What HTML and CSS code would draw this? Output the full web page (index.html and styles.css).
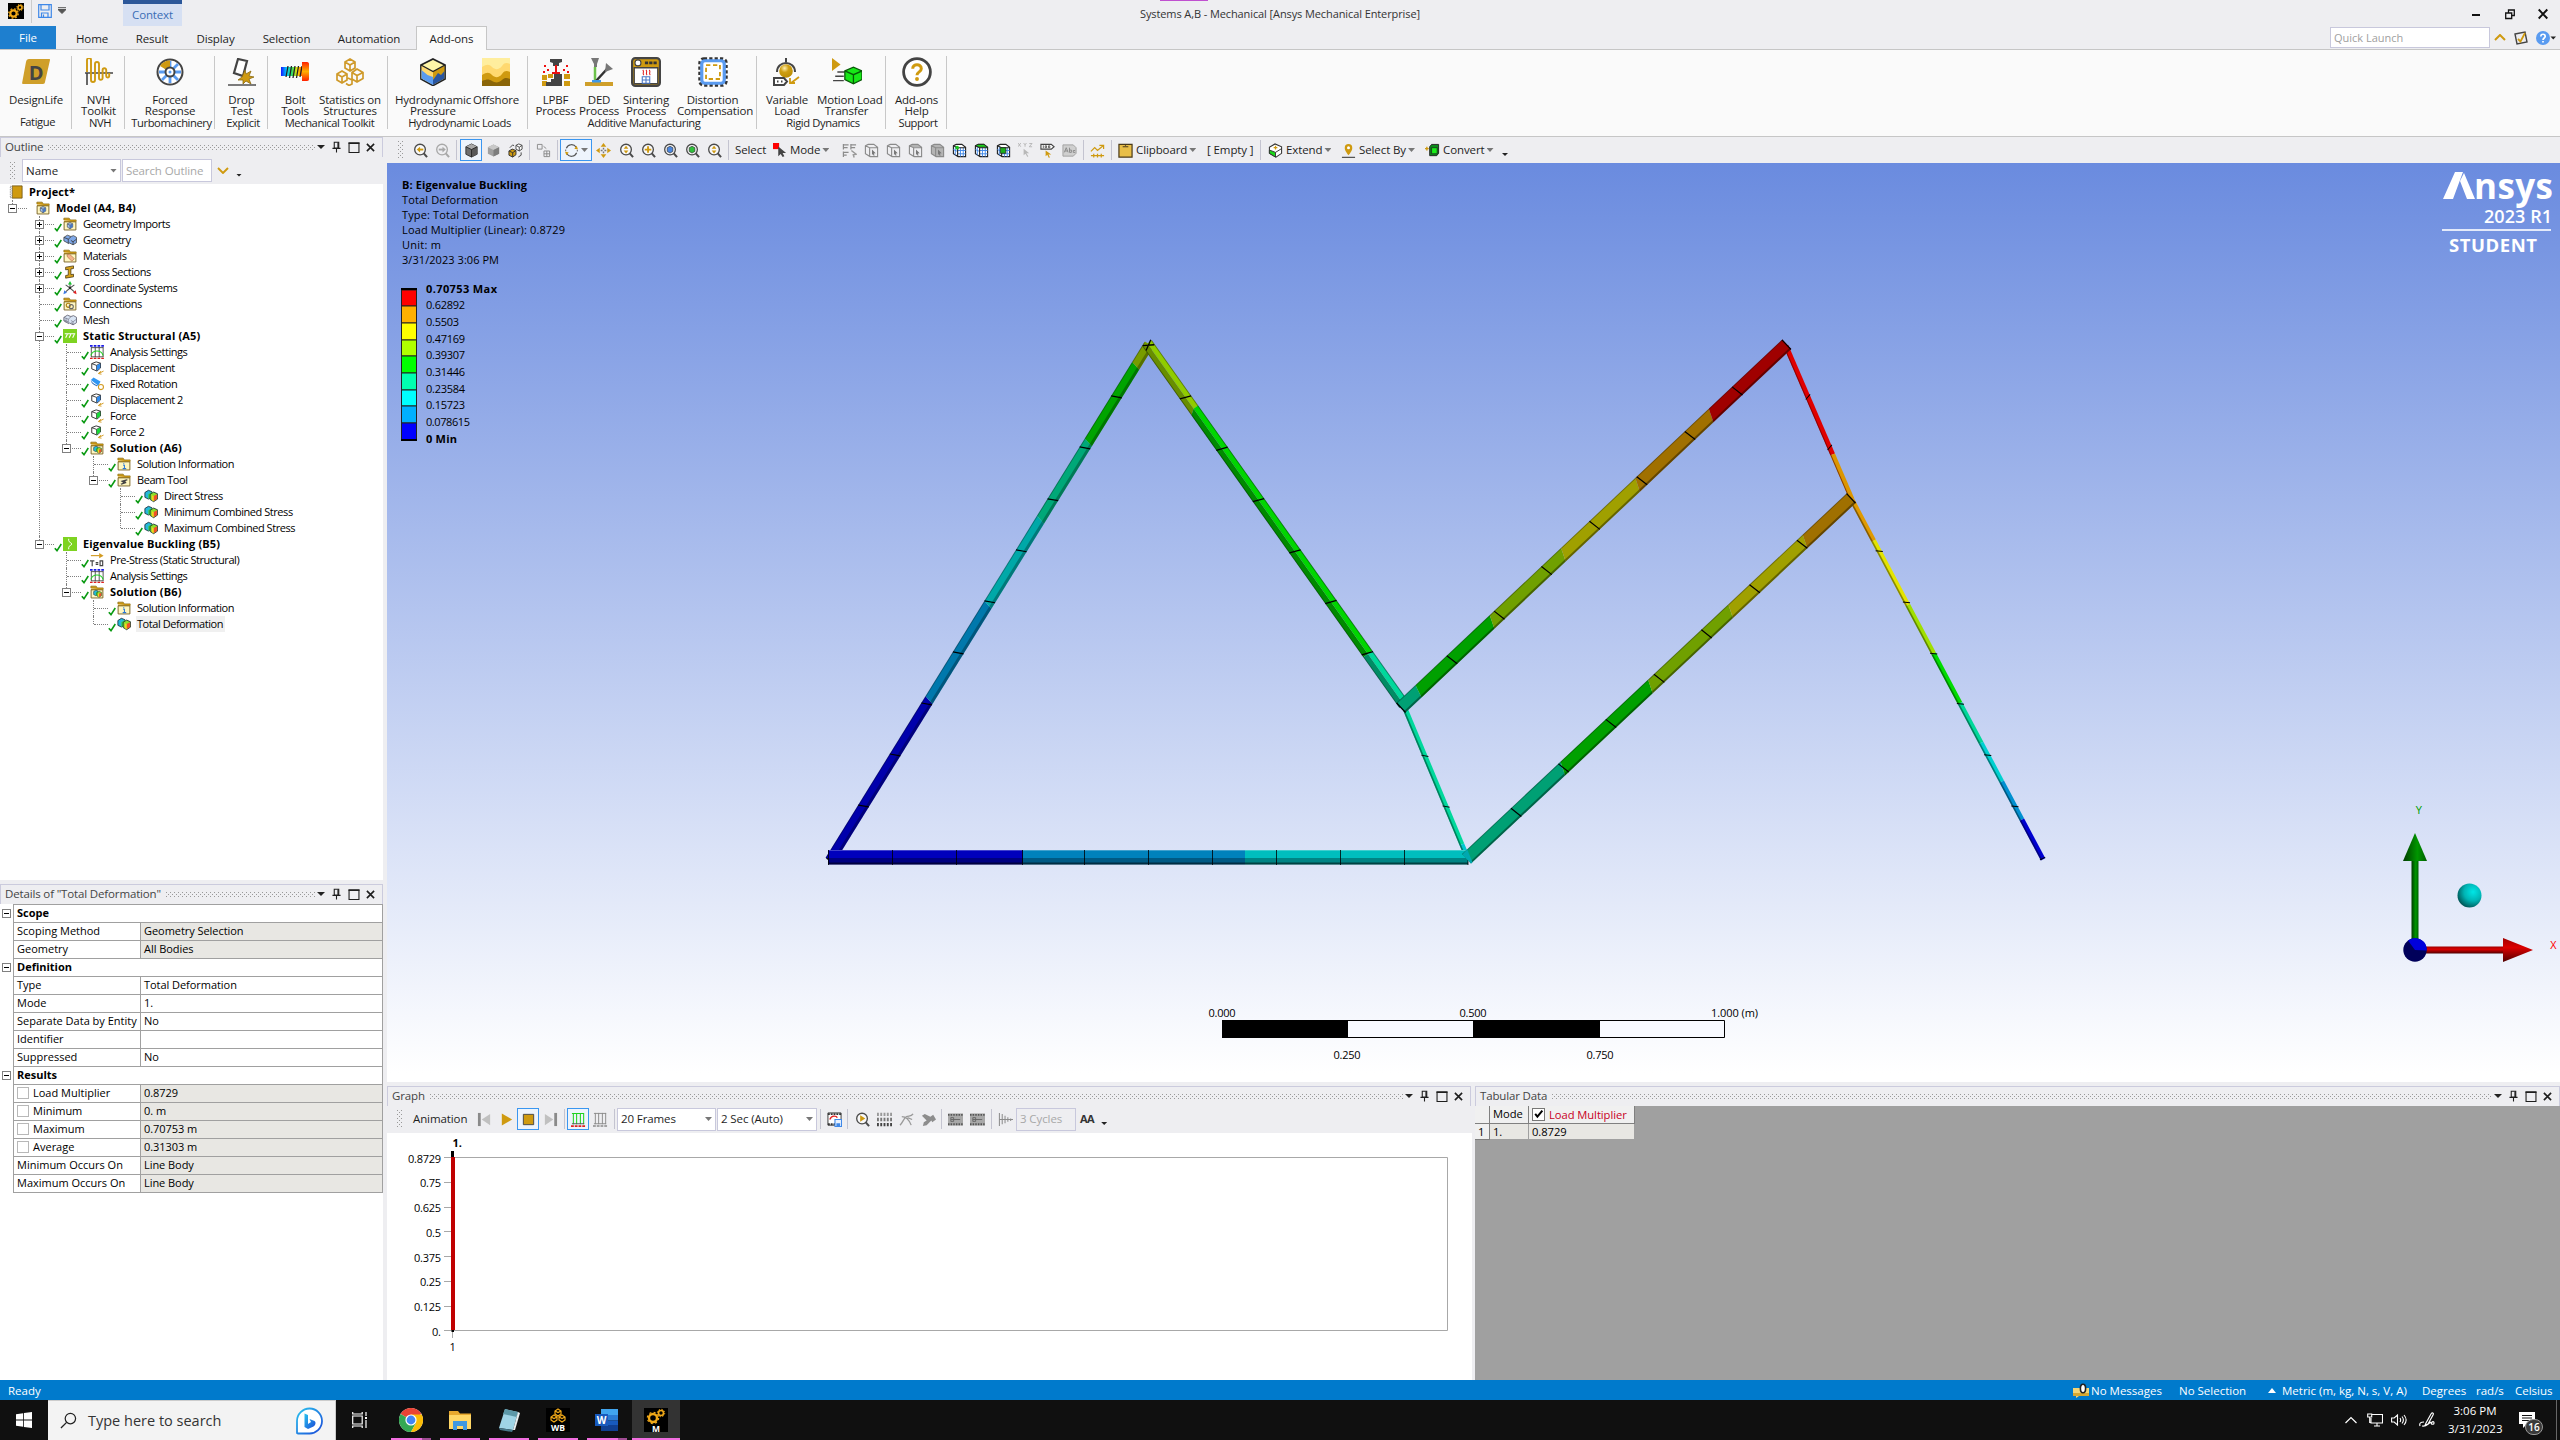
FILE: index.html
```html
<!DOCTYPE html>
<html lang="en">
<head>
<meta charset="utf-8">
<title>Systems A,B - Mechanical [Ansys Mechanical Enterprise]</title>
<link rel="stylesheet" href="styles.css">
</head>
<body>
<svg class="defs" width="0" height="0">
<defs>
<linearGradient id="rainbow"><stop offset="0" stop-color="#1414ff"/><stop offset=".25" stop-color="#00c8ff"/><stop offset=".5" stop-color="#30e060"/><stop offset=".75" stop-color="#ffe000"/><stop offset="1" stop-color="#ff4000"/></linearGradient>
<linearGradient id="boltHead" x2="0" y2="1"><stop offset="0" stop-color="#ff2000"/><stop offset=".5" stop-color="#ffb000"/><stop offset="1" stop-color="#ff2000"/></linearGradient>
<radialGradient id="ballCyan" cx=".65" cy=".35" r=".75"><stop offset="0" stop-color="#00e6e6"/><stop offset=".5" stop-color="#00b4b4"/><stop offset="1" stop-color="#004848"/></radialGradient>
<radialGradient id="ballGold" cx=".4" cy=".3" r=".75"><stop offset="0" stop-color="#fff0b0"/><stop offset=".4" stop-color="#cf9f12"/><stop offset="1" stop-color="#b98a00"/></radialGradient>
<linearGradient id="shaftG"><stop offset="0" stop-color="#003c00"/><stop offset=".6" stop-color="#009600"/><stop offset="1" stop-color="#006000"/></linearGradient>
<linearGradient id="shaftR" x2="0" y2="1"><stop offset="0" stop-color="#a00000"/><stop offset=".4" stop-color="#dc0000"/><stop offset="1" stop-color="#500000"/></linearGradient>
<linearGradient id="bingG" x2="1" y2="1"><stop offset="0" stop-color="#2ac3ee"/><stop offset="1" stop-color="#1b4ad8"/></linearGradient>

<symbol id="check" viewBox="0 0 8 9"><path d="M.8 5.2 3 7.6 7.3 1" fill="none" stroke="#0a9a12" stroke-width="1.6"/></symbol>
<symbol id="folder" viewBox="0 0 16 16"><path d="M1 3.500V1.300h6l1.500 2H15v2" fill="#c89510" stroke="#8a6a10" stroke-width=".8"/><path d="M1 4h14v11H1z" fill="#c89510"/><path d="M1.300 5.600h13.400v9.200H1.300z" fill="#fff6c0" stroke="#6b5a2a" stroke-width=".9"/></symbol>
<symbol id="cubeb" viewBox="0 0 16 16"><path d="m8 2 5 2.500v6L8 13.500l-5-3v-6z" fill="#9fc0f0" stroke="#333" stroke-width="1"/><path d="m3 4.500 5 2.500 5-2.500M8 7v6.500" fill="none" stroke="#333"/><path d="m8 7 5-2.500v6l-5 3z" fill="#4a78c0"/></symbol>
<symbol id="f-geo" viewBox="0 0 16 16"><use href="#folder"/><use href="#cubeb" x="3" y="5" width="10" height="10"/></symbol>
<symbol id="f-mat" viewBox="0 0 16 16"><use href="#folder"/><path d="m4.500 6.500 3-.5 5.500 5-2.800 3-5.200-5z" fill="#f2b48c" stroke="#b06a40" stroke-width=".7"/></symbol>
<symbol id="f-con" viewBox="0 0 16 16"><use href="#folder"/><circle cx="6" cy="9.500" r="2.300" fill="none" stroke="#b08010" stroke-width="1.300"/><circle cx="9.500" cy="11" r="2.300" fill="none" stroke="#666" stroke-width="1.200"/></symbol>
<symbol id="f-sol" viewBox="0 0 16 16"><use href="#folder"/><use href="#result" x="3" y="5" width="11" height="10"/></symbol>
<symbol id="f-info" viewBox="0 0 16 16"><use href="#folder"/><path d="M7 9.500h1.500v3.500M6.500 13.300h4M7.700 7v1.200" fill="none" stroke="#2a78d8" stroke-width="1.200"/></symbol>
<symbol id="f-beam" viewBox="0 0 16 16"><use href="#folder"/><path d="m4 9 7-2 1.500 1-3 1.500 1.500 2-6 2-1-1.200 3-1.300z" fill="#444"/></symbol>
<symbol id="project" viewBox="0 0 16 16"><path d="M3.500 1H15v14H3.500z" fill="#cf9a10" stroke="#6b5010" stroke-width=".9"/><path d="M1.500 1.500h2v13h-2z" fill="#eee" stroke="#777" stroke-dasharray="1 1"/></symbol>
<symbol id="geo" viewBox="0 0 16 16"><path d="m1 5 4-2.500 4 1.500 3-1 3.500 2v6l-4 2.500-4-2-1 .5-5.500-3z" fill="#7fa8e8" stroke="#444" stroke-width=".9"/><path d="m1 5 5 2 3-2.500M6 7v5M9 8.500l2.500 1.500 4-3M11.500 10v3.500" fill="none" stroke="#333" stroke-width=".9"/></symbol>
<symbol id="mesh" viewBox="0 0 16 16"><path d="m1 5 4-2.500 4 1.500 3-1 3.500 2v6l-4 2.500-4-2-1 .5-5.500-3z" fill="#d8e4f4" stroke="#556" stroke-width=".9"/><path d="m1 5 5 2 3-2.500M6 7v5M9 8.500l2.500 1.500 4-3M11.500 10v3.500M3.500 6v5M1 8l5 2M9 11l2.500 1" fill="none" stroke="#667" stroke-width=".7"/></symbol>
<symbol id="section" viewBox="0 0 16 16"><path d="m3 2.500 9-1.500v3l-3 .5v6.500l3-.5v3l-9 1.500v-3l3-.5V5L3 5.500z" fill="#d8a21a" stroke="#4a3a10" stroke-width=".9"/></symbol>
<symbol id="csys" viewBox="0 0 16 16"><path d="M8 8V3M8 8l-5 4.500M8 8l5 4.500M8 8 3 4.500M8 8l5-3.500" stroke="#555" stroke-width="1.200" fill="none"/><path d="m8 0 2.300 4H5.700z" fill="#19c531"/><path d="m.5 15 1-4.500 3 3z" fill="#3b78e0"/><path d="m15.500 15-1-4.500-3 3z" fill="#e02020"/><circle cx="8" cy="8" r="1.300" fill="#222"/></symbol>
<symbol id="static" viewBox="0 0 16 16"><path d="M0 0h16v16H0z" fill="#7ed321"/><path d="M2 5.500h12M5 6l-2 4M9 6l-2 4M13 6l-2 4" stroke="#fff" stroke-width="1.200"/></symbol>
<symbol id="eigen" viewBox="0 0 16 16"><path d="M0 0h16v16H0z" fill="#7ed321"/><path d="M6.500 2v2c0 2 3.500 2.500 3.500 4s-3.500 2-3.500 4v2" stroke="#fff" stroke-width="1.100" fill="none"/></symbol>
<symbol id="settings" viewBox="0 0 16 16"><path d="M1.500 2v12M6 2v12M10.500 2v12M15 2v12M1.500 3H15M1.500 13.500H15" stroke="#444" stroke-width="1" fill="none"/><path d="M1 12c2-7 12-7 14 0" fill="none" stroke="#23d123" stroke-width="1.200"/><path d="M0 1h16" stroke="#1a1ae8" stroke-width="2" stroke-dasharray="3 1.300"/><path d="M0 15.200h16" stroke="#e02020" stroke-width="1.500" stroke-dasharray="3 1.300"/></symbol>
<symbol id="disp" viewBox="0 0 16 16"><path d="m2 3 5-2 5 1.500V8l-4 3.500L2 9z" fill="#fff" stroke="#333" stroke-width="1.100"/><path d="m2 3 5.500 2V11M7.500 5 12 2.500" fill="none" stroke="#333"/><path d="m7.700 5.200 4-2.300v5l-4 3.200z" fill="#2f8cf0"/><path d="m15.500 11.500-5 2.500m2-2.300-3 2.600 3.600.8" fill="none" stroke="#d29a20" stroke-width="1.100"/></symbol>
<symbol id="force" viewBox="0 0 16 16"><path d="m2 3 5-2 5 1.500V8l-4 3.500L2 9z" fill="#fff" stroke="#333" stroke-width="1.100"/><path d="m2 3 5.500 2V11M7.500 5 12 2.500" fill="none" stroke="#333"/><path d="m7.700 5.200 4-2.300v5l-4 3.200z" fill="#18d838"/><path d="m15.500 11.500-5 2.500m2-2.300-3 2.600 3.600.8" fill="none" stroke="#d29a20" stroke-width="1.100"/></symbol>
<symbol id="fixrot" viewBox="0 0 16 16"><path d="M1 3.500 4 .5l8 4.500-2.500 5z" fill="#2f96f3"/><path d="M1 3.500c-.5 2 7 7 8.500 6.500l-2 .5C4 9 .5 6 1 3.500z" fill="#1a62b8"/><circle cx="12.500" cy="11.500" r="2.900" fill="#fff" stroke="#d29a20" stroke-width="1.200"/></symbol>
<symbol id="result" viewBox="0 0 16 16"><path d="m1 4 4-2.500 4 1.500v6l-4 2.500-4-2z" fill="#26b9d9" stroke="#123" stroke-width=".9"/><path d="M5 6v5.500L9 9V3.500z" fill="#3fd23f"/><path d="m7 6 4-2.500 4.500 2v6l-4.500 3-4-2.500z" fill="#8ce02a" stroke="#123" stroke-width=".9"/><path d="M11 8v6l4-2.500v-5.500z" fill="#f0502a"/><path d="m9 7.200 2 .8v6l-2-1.200z" fill="#f8d020"/></symbol>
<symbol id="prestress" viewBox="0 0 16 16"><path d="M1 3h10" stroke="#d29a20" stroke-width="1.300"/><path d="m10.500 0 5 3-5 3z" fill="#d29a20"/><path d="M0 9h5M2.500 9v6M6.500 11h3M6.500 13h3M11.500 9h3v5.500h-3z" fill="none" stroke="#444" stroke-width="1.300"/></symbol>

<symbol id="pin" viewBox="0 0 10 12"><path d="M2.500.8h5v6.400h-5zM.5 7.500h9M5 8v4" fill="none" stroke="#1e1e1e" stroke-width="1.200"/><path d="M6 1h1.500v6H6z" fill="#1e1e1e"/></symbol>
<symbol id="maxi" viewBox="0 0 10 10"><path d="M.5 1h9v8.500h-9z" fill="none" stroke="#1e1e1e"/><path d="M0 .4h10v1.400H0z" fill="#1e1e1e"/></symbol>
<symbol id="cross" viewBox="0 0 10 10"><path d="m1 1 8 8M9 1 1 9" stroke="#1e1e1e" stroke-width="1.800"/></symbol>
<symbol id="gears" viewBox="0 0 16 16"><path d="M0 0h16v16H0z" fill="#000"/><circle cx="5.500" cy="10.500" r="3.200" fill="none" stroke="#f0a818" stroke-width="2.200"/><circle cx="5.500" cy="10.500" r="4.700" fill="none" stroke="#f0a818" stroke-width="1.300" stroke-dasharray="1.800 1.890"/><circle cx="12" cy="4.500" r="2" fill="none" stroke="#f0a818" stroke-width="1.600"/><circle cx="12" cy="4.500" r="3.200" fill="none" stroke="#f0a818" stroke-dasharray="1.200 1.313"/></symbol>

<symbol id="lens" viewBox="0 0 16 16"><circle cx="7.500" cy="7" r="5.700" fill="#fff" fill-opacity=".6" stroke="#4a4a4a" stroke-width="1.400"/><path d="m11.500 11 3.500 4" stroke="#4a4a4a" stroke-width="2.200"/></symbol>
<symbol id="z-prev" viewBox="0 0 16 16"><use href="#lens"/><path d="M11 7H6" stroke="#cf9a10" stroke-width="2"/><path d="M7.500 4v6L4 7z" fill="#cf9a10"/></symbol>
<symbol id="z-next" viewBox="0 0 16 16"><circle cx="7.500" cy="7" r="5.700" fill="none" stroke="#a8a8a8" stroke-width="1.400"/><path d="m11.500 11 3.500 4" stroke="#a8a8a8" stroke-width="2.200"/><path d="M4 7h5" stroke="#a8a8a8" stroke-width="2"/><path d="M8 4v6l3.500-3z" fill="#a8a8a8"/></symbol>
<symbol id="z-fit" viewBox="0 0 16 16"><use href="#lens"/><path d="M7.500 2.800 10 6H5zM7.500 11.200 10 8H5z" fill="#cf9a10"/></symbol>
<symbol id="z-in" viewBox="0 0 16 16"><use href="#lens"/><path d="M7.500 3.500v7M4 7h7" stroke="#cf9a10" stroke-width="2"/></symbol>
<symbol id="z-cubeb" viewBox="0 0 16 16"><use href="#lens"/><path d="m7.500 3.500 3 1.500v4l-3 1.700-3-1.700V5z" fill="#4a86e0" stroke="#333" stroke-width=".7"/></symbol>
<symbol id="z-cubeg" viewBox="0 0 16 16"><use href="#lens"/><path d="m7.500 3.500 3 1.500v4l-3 1.700-3-1.700V5z" fill="#2fc03a" stroke="#333" stroke-width=".7"/></symbol>
<symbol id="z-play" viewBox="0 0 16 16"><use href="#lens"/><path d="M5.500 3.500v7L11 7z" fill="#cf9a10"/></symbol>
<symbol id="cubed" viewBox="0 0 16 16"><path d="m8 1 6 3v8l-6 3-6-3V4z" fill="#6e6e6e" stroke="#333"/><path d="m8 1 6 3-6 3-6-3z" fill="#a8a8a8"/><path d="m8 7 6-3v8l-6 3z" fill="#585858"/><path d="m2 4 6 3 6-3M8 7v8" stroke="#2a2a2a" fill="none"/></symbol>
<symbol id="cubel" viewBox="0 0 16 16"><path d="m8 1.500 6 3v7L8 14.500l-6-3v-7z" fill="#a0a0a0"/><path d="m8 1.500 6 3-6 3-6-3z" fill="#c8c8c8"/><path d="m8 7.500 6-3v7l-6 3z" fill="#7d7d7d"/></symbol>
<symbol id="cubes2" viewBox="0 0 16 16"><path d="m1 8.500 3.500-2 4 1.500v4.500L5 15l-4-2z" fill="#cf9a10" stroke="#333"/><path d="m1 8.500 4 1.800 3.500-2.300M5 10.300V15" stroke="#333" fill="none"/><path d="m8.500 2.500 3-1.500L15 2.500v4L12 8.500l-3.500-2z" fill="#fff" stroke="#444"/><path d="m8.500 2.500 3.500 2 3-2M12 4.500v4M2 5l3-3 1.500 1M14 10v3l-3 2" stroke="#444" fill="none"/></symbol>
<symbol id="boxes" viewBox="0 0 16 16"><path d="M1.500 1.500h5v5h-5zM8.500 8.500h6v6h-6zM11.500 8.500v6M8.500 11.500h6M8 3.500l3 2.500" fill="none" stroke="#8a8a8a"/></symbol>
<symbol id="rotate" viewBox="0 0 16 16"><path d="M2.500 5.500A6 6 0 0 1 13 4.500M13.500 10.500A6 6 0 0 1 3 11.500" fill="none" stroke="#555" stroke-width="1.300"/><path d="m13.500 3 1.500 4-4-1zM2.500 13 1 9l4 1z" fill="#cf9a10"/><path d="M1.800 7v1.500M14.200 7.500V9" stroke="#555"/></symbol>
<symbol id="pan" viewBox="0 0 16 16"><path d="m8 0 3 4H5zM8 16l3-4H5zM0 8l4-3v6zM16 8l-4-3v6z" fill="#cf9a10"/><path d="M8 5v2M8 9v2M5 8h2M9 8h2" stroke="#777" stroke-width="1.500"/></symbol>
<symbol id="mode" viewBox="0 0 16 16"><path d="M0 0h7v7H0z" fill="#f00"/><path d="M6 4v11l2.800-2.500L11 16l2-1-2-3.500h4z" fill="#444"/></symbol>
<symbol id="g-flt" viewBox="0 0 16 16"><path d="M1 2h6M1 5h5M1.500 1v6M9 2h6M9 5h5M9.500 1v6M1 10h6M1 13h4M1.500 9v6" stroke="#8c8c8c" stroke-width="1.300"/><path d="m10 8 5 4-3 .5 1 3" fill="none" stroke="#999" stroke-width="1.500"/></symbol>
<symbol id="g-cube" viewBox="0 0 16 16"><path d="M1.500 3 4.500 1.500h6l4 3v10h-8l-5-3zM1.500 3l4.500 2h8.500M6 5v9.500" fill="none" stroke="#8a8a8a" stroke-width="1.200"/><path d="m8.500 7 4 4-2 .2.800 2-1 .5-.8-2-1 1z" fill="#777"/></symbol>
<symbol id="g-cubef" viewBox="0 0 16 16"><path d="M1.500 3 4.500 1.500h6l4 3v10h-8l-5-3z" fill="#b4b4b4"/><use href="#g-cube"/></symbol>
<symbol id="g-cubet" viewBox="0 0 16 16"><path d="M1.500 3 4.500 1.500h6l4 3H6z" fill="#b4b4b4"/><use href="#g-cube"/></symbol>
<symbol id="m-cube" viewBox="0 0 16 16"><path d="M1.500 3 4.500 1.500h6l4 3v10h-8l-5-3z" fill="#fff" stroke="#222" stroke-width="1.200"/><path d="M6 8h8.500M6 11.500h8.500M9 5v9.500M12 5v9.500M3.500 4v9M1.500 7 6 9" stroke="#3f88e8" fill="none"/><path d="m1.500 3 4.500 2h8.500M6 5v9.500" stroke="#222" fill="none" stroke-width="1.200"/></symbol>
<symbol id="m-1" viewBox="0 0 16 16"><use href="#m-cube"/><circle cx="5.500" cy="5" r="2" fill="#1ec41e"/></symbol>
<symbol id="m-2" viewBox="0 0 16 16"><use href="#m-cube"/><path d="M1.500 3 4.500 1.500h6l4 3H6z" fill="#1ed01e" stroke="#222" stroke-width=".8"/></symbol>
<symbol id="m-3" viewBox="0 0 16 16"><use href="#m-cube"/><path d="M4.500 5h6v6h-6z" fill="#1ab01a" stroke="#222" stroke-width=".8"/></symbol>
<symbol id="xyz" viewBox="0 0 16 16"><path d="m0 0 3 4M3 0 0 4M6 0l1.500 2L9 0M7.500 2v2M12 .5h3l-3 3.500h3" fill="none" stroke="#b0b0b0" stroke-width=".9"/><path d="M6 6v7l2-1.500L10 15l1-1-2-3h3z" fill="#b8b8b8"/></symbol>
<symbol id="tag" viewBox="0 0 16 16"><path d="M1 1.500h11l3 2.500-3 2.500H1z" fill="#fff" stroke="#444" stroke-width="1.200"/><path d="M3.500 2.500v3M5.500 3h1.500v2H5.500zM9 3h1.500v2H9z" stroke="#333" fill="none" stroke-width=".8"/><path d="M6 8v6l1.800-1.500L9.500 16l1-.8-1.500-3h3z" fill="#cf9a10"/></symbol>
<symbol id="abc" viewBox="0 0 16 16"><path d="M1 2h11l3 3v6l-3 3H1z" fill="#cfcfcf" stroke="#a0a0a0"/><path d="m2.500 10 2-5 2 5M3 8.500h3M8 5v5h2V7.500H8M14 8h-2v2h2" fill="none" stroke="#8a8a8a"/></symbol>
<symbol id="chart" viewBox="0 0 16 16"><path d="m1 9 4-4 3 3 6-5M10 2.500h4.500v4M1 13.500h14M4 11.500v4M8 11.500v4M12 11.500v4" fill="none" stroke="#cf9a10" stroke-width="1.300"/></symbol>
<symbol id="clip" viewBox="0 0 16 16"><path d="M1 1.500h14v13.500H1z" fill="#e8be48" stroke="#4a3a1a" stroke-width="1.300"/><path d="M5 4h6M8 1v2" stroke="#4a3a1a" stroke-width="1.200"/></symbol>
<symbol id="extend" viewBox="0 0 16 16"><path d="m1.500 4.500 6-3.500 7 3v7l-6 4-7-4z" fill="#fff" stroke="#333" stroke-width="1.100"/><path d="m1.500 7.500 6.500 2.500v5l-6.500-4z" fill="#19d819" stroke="#333"/><path d="m8 10 6.500-4" stroke="#333"/><path d="M8 3v4M6 5h4" stroke="#cf9a10" stroke-width="1.300"/></symbol>
<symbol id="place" viewBox="0 0 16 16"><path d="M8 13C4 8 4 6.500 4 5a4 4 0 0 1 8 0c0 1.500 0 3-4 8z" fill="#cf9a10"/><circle cx="8" cy="5" r="1.600" fill="#fff"/><path d="M1 15.300h14" stroke="#444" stroke-width="1.200"/></symbol>
<symbol id="convert" viewBox="0 0 16 16"><path d="M0 6h4M2 4v4" stroke="#cf9a10" stroke-width="1.500"/><path d="m5 4 2-2.500h7.500V11l-2 2.500H5z" fill="#0c8a1a" stroke="#222"/><path d="M7 5h6v6.500H7z" fill="#19f019" stroke="#222" stroke-width=".8"/></symbol>

<symbol id="bars" viewBox="0 0 16 16"><path d="M2.500 1v12M6 1v12M10 1v12M13.500 1v12M1 1.500h13" fill="none" stroke="#1fd21f" stroke-width="1.100"/><path d="M1 12.500h13" stroke="#555"/><path d="M0 15h16" stroke="#e02020" stroke-width="2" stroke-dasharray="3 1"/></symbol>
<symbol id="barsg" viewBox="0 0 16 16"><path d="M2.500 1v12M6 1v12M10 1v12M13.500 1v12M1 1.500h13M1 12.500h13" fill="none" stroke="#8a8a8a"/><path d="M0 15h16" stroke="#8a8a8a" stroke-width="1.500" stroke-dasharray="3 1"/></symbol>
<symbol id="film" viewBox="0 0 16 16"><path d="M1 1h14v13H1z" fill="#fff" stroke="#333"/><path d="M1 2.200h14M1 13h8" stroke="#333" stroke-width="2" stroke-dasharray="2 1"/><path d="M3 8c2-5 7-4 8-2" fill="none" stroke="#e02020" stroke-width="1.500"/><path d="M8.500 8h7v7.500h-7z" fill="#e8f2ff" stroke="#3f88e8" stroke-width="1.200"/><path d="M10 12h4v3.500h-4z" fill="#3f88e8"/></symbol>
<symbol id="gridd" viewBox="0 0 16 16"><path d="M0 2.500h16" stroke="#999" stroke-width="3.500" stroke-dasharray="2 1.500"/><path d="M0 8h16" stroke="#777" stroke-width="3.500" stroke-dasharray="2 1.500"/><path d="M0 13.500h16" stroke="#444" stroke-width="3.500" stroke-dasharray="2 1.500"/></symbol>
<symbol id="curve" viewBox="0 0 16 16"><path d="M1 14c3-2 4-8 7-9s5 0 7-3M3 5c4 0 8 4 10 9M9 6l5 2" fill="none" stroke="#9a9a9a" stroke-width="1.400"/></symbol>
<symbol id="wrench" viewBox="0 0 16 16"><path d="m1 4 3-2 6 3 3-2 3 5-4 3-1-2-5 5-4 1 1-4 3-2z" fill="#8d8d8d"/></symbol>
<symbol id="filmg" viewBox="0 0 16 16"><path d="M0 1.500h16v13H0z" fill="#a8a8a8"/><path d="M0 3h16M0 13h16" stroke="#555" stroke-width="2" stroke-dasharray="1.600 1.200"/><path d="M3 8h10M3 6v4h3V6z" stroke="#666" fill="none"/></symbol>
<symbol id="damp" viewBox="0 0 16 16"><path d="M1.500 1v14M1.500 8H16M4.500 2v11M7.500 4v8M10.500 5.500v5M13.500 7v2.500" fill="none" stroke="#8c8c8c" stroke-width="1.100"/></symbol>

<symbol id="R-life" viewBox="0 0 28 28"><path d="M7 1h20c1 0 1 .5 1 1l-5 22c0 1-1 2-2 2H1c-1 0-1-1-.8-1.500L4 4c.3-2 1.500-3 3-3z" fill="#cf9f2a"/><text x="14" y="21.500" class="logoD" text-anchor="middle">D</text></symbol>
<symbol id="R-nvh" viewBox="0 0 28 28"><path d="M2 15v12M0 15h28" stroke="#444" stroke-width="1.600" fill="none"/><path d="M2 14V2a2 2 0 0 1 4 0v20a2 2 0 0 0 4 0V6a2 2 0 0 1 4 0v14a1.800 1.800 0 0 0 3.600 0v-8a1.800 1.800 0 0 1 3.600 0v6a1.500 1.500 0 0 0 3 0v-3" fill="none" stroke="#cf9a10" stroke-width="1.900"/></symbol>
<symbol id="R-wheel" viewBox="0 0 28 28"><circle cx="14" cy="14" r="12.500" fill="#fff" stroke="#444" stroke-width="2"/><path d="M14 3v22M3 14h22M6 6l16 16M22 6 6 22" stroke="#5a9bf0" stroke-width="2.800"/><path d="M14 14V2.500A11.500 11.500 0 0 0 4 8z" fill="#cf9a10"/><circle cx="14" cy="14" r="4.500" fill="#fff" stroke="#444" stroke-width="2"/><circle cx="14" cy="14" r="1.500" fill="#5a9bf0"/></symbol>
<symbol id="R-drop" viewBox="0 0 28 28"><path d="m10 1 9 2-4 15-9-3z" fill="#fff" stroke="#444" stroke-width="2.200"/><path d="m17 12 1 4 5-3-2 5 5 1-5 2 2 5-5-3-3 3v-4l-5 0 4-3z" fill="#cf9a10" stroke="#8a6a10" stroke-width=".8"/><path d="M0 27h28" stroke="#444" stroke-width="1.400"/></symbol>
<symbol id="R-bolt" viewBox="0 0 28 28"><path d="M0 9h22v9H0z" fill="url(#rainbow)"/><path d="m5 19 2-11M8.500 20l2-12M12 20l2-12M15.500 20l2-12M19 19l2-11" stroke="#222" stroke-width="1.300"/><path d="M21 4h5c1.500 0 2 1 2 2v15c0 1-.5 2-2 2h-5z" fill="url(#boltHead)"/></symbol>
<symbol id="R-stat" viewBox="0 0 28 28"><g fill="none" stroke="#cf9a2a" stroke-width="1.700"><path d="m14 1 5 3v6l-5 3-5-3V4zM9 4l5 3 5-3M14 7v6M6 13l5 3v6l-5 3-5-3v-6zM1 16l5 3 5-3M6 19v6M21 11l6 3.500v6L21 24l-5-3v-6.500zM16 14.500l5 3 6-3M21 17.500V24M12 20l4 2v4l-3 1.500-3-2"/></g></symbol>
<symbol id="R-hydro" viewBox="0 0 28 28"><path d="m14 1 12 6v14l-12 6.500L2 21V7z" fill="#fff6a8" stroke="#222" stroke-width="1.800"/><path d="m2.500 7.500 11.500 6v13L2.500 20.500z" fill="#ffd970"/><path d="m2.500 12 6 5 5.500 2v8L2.500 20.500z" fill="#5a9bf0"/><path d="m14 13.500 11.500-6v13L14 27z" fill="#cf9a10"/><path d="m14 22 5-7 3 2 3.500-4v7.500L14 27z" fill="#2a56a0"/><path d="m2 7 12 6.500L26 7" stroke="#222" fill="none" stroke-width="1.400"/></symbol>
<symbol id="R-off" viewBox="0 0 28 28"><path d="M0 0h28v28H0z" fill="#ffee9e"/><path d="M0 9c5-3 7-3 10 0s7 3 10-1 5-3 8-2v22H0z" fill="#ffd970"/><path d="M0 17c5-3 7-3 10 0s7 3 10-1 5-3 8-2v14H0z" fill="#cf9a10"/><path d="M0 23c5-2 7-2 10 0s7 2 10-1 5-2 8-1v7H0z" fill="#8a6508"/></symbol>
<symbol id="R-lpbf" viewBox="0 0 28 28"><path d="M8 1h12v3l-3 1v3h-6V5L8 4z" fill="#444"/><path d="M14 7v8M10 15h8" stroke="#e81010" stroke-width="2"/><path d="M2 8h2M24 8h2M5 12h2M21 12h2M1 14h2M25 14h2" stroke="#f01010" stroke-width="2"/><path d="M0 17h5v5H0zM0 23h5v5H0zM6 16h5v4H6zM22 16h6v5h-6zM22 23h6v5h-6z" fill="#cf9a10"/><path d="M12 16h8v12H4v-4h5v-3h3z" fill="#444"/></symbol>
<symbol id="R-ded" viewBox="0 0 28 28"><path d="M6 0h8l-2 6v3H9V6z" fill="#777"/><path d="M10 9v14" stroke="#6cc24a" stroke-width="2.500"/><path d="m11 23 11-12" stroke="#333" stroke-width="2.500"/><path d="m21 5 7 6-8 3z" fill="#777"/><path d="M0 24h28v4H0z" fill="#cf9f2a"/><path d="M7 22h9v2.500H7z" fill="#3f98e8"/></symbol>
<symbol id="R-sint" viewBox="0 0 28 28"><rect x="1" y="1" width="26" height="26" rx="3" fill="#cf9a10" stroke="#444" stroke-width="2"/><circle cx="6.500" cy="5.500" r="2.800" fill="#fff" stroke="#444"/><path d="M13 5.500h11" stroke="#333" stroke-width="2.500" stroke-dasharray="3 1"/><path d="M3 10h22v15H3z" fill="#fff" stroke="#444" stroke-width="1.300"/><path d="M11 12c2 2-1 3 1 5M14 12c2 2-1 3 1 5M17 12c2 2-1 3 1 5" stroke="#e02020" fill="none"/><path d="M10.500 18.500h7v6h-7zM14 18.500v6M10.500 21.500h7" stroke="#4a78c8" fill="none"/></symbol>
<symbol id="R-dist" viewBox="0 0 28 28"><rect x="1.500" y="1.500" width="25" height="25" rx="4" fill="none" stroke="#333" stroke-width="2.500" stroke-dasharray="3 2"/><rect x="3.500" y="3.500" width="21" height="21" rx="3" fill="#fff" stroke="#5a9bf0" stroke-width="3"/><rect x="7.500" y="7.500" width="13" height="13" fill="none" stroke="#cf9a10" stroke-width="1.700" stroke-dasharray="4 2.500"/></symbol>
<symbol id="R-var" viewBox="0 0 28 28"><path d="M13 0v4M4 14C4 2 22 2 22 14" fill="none" stroke="#444" stroke-width="2"/><circle cx="13" cy="13" r="6.800" fill="url(#ballGold)"/><path d="M1 20h10l3 3.500-3 3.500H1z" fill="#fff" stroke="#444" stroke-width="2"/><path d="M4 23.500h1.500M8 23.500h1.500" stroke="#444" stroke-width="2"/><path d="m26 19-8 6M22 25h-5v-5" stroke="#cf9a10" stroke-width="1.800" fill="none"/></symbol>
<symbol id="R-mot" viewBox="0 0 28 28"><path d="m0 1 8 6-8 6z" fill="#cf9a10"/><path d="M5 14h7M3 18h8M1 22h10" stroke="#444" stroke-width="1.300"/><path d="m12 13 8-3.500L28 13v8l-8 4-8-4z" fill="#17e817" stroke="#075a07" stroke-width="1.200"/><path d="m12 13 8 3.500 8-3.500M20 16.500V25" fill="none" stroke="#075a07" stroke-width="1.200"/></symbol>
<symbol id="R-help" viewBox="0 0 28 28"><circle cx="14" cy="14" r="12.500" fill="#fff" stroke="#444" stroke-width="2.600"/><path d="M10 11c0-5 8-5 8 0 0 3-4 2.800-4 6" fill="none" stroke="#cf9a10" stroke-width="2.800"/><circle cx="14" cy="20.500" r="1.800" fill="#cf9a10"/></symbol>
</defs>
</svg>

<header class="titlebar">
  <svg class="app"><use href="#gears"/></svg><i class="vr"></i>
  <svg class="save" viewBox="0 0 14 14"><path d="M.7.700h12.600v12.600H.7zM3 1v5h8V1M3.500 13V9h6.500v4M5.500 10.500v2.500" fill="none" stroke="#3f88e8" stroke-width="1.200"/></svg>
  <svg class="qat" viewBox="0 0 8 7"><path d="M0 .7h8M0 2.500h8L4 6.500z" stroke="#555" fill="#555"/></svg>
  <span class="context">Context</span>
  <h1>Systems A,B - Mechanical [Ansys Mechanical Enterprise]</h1>
  <div class="winbtns">
    <svg viewBox="0 0 10 12"><path d="M1 7h8" stroke="#111" stroke-width="2"/></svg>
    <svg viewBox="0 0 10 12"><path d="M.7 5h6v5.500h-6zM3.500 4.500V2h5.800v5.500H7" fill="none" stroke="#111" stroke-width="1.300"/></svg>
    <svg viewBox="0 0 10 12"><path d="m.7 1.500 8.600 9M9.300 1.500l-8.600 9" stroke="#111" stroke-width="1.900"/></svg>
  </div>
</header>

<nav class="tabs">
  <a class="file">File</a><a class="t1">Home</a><a class="t2">Result</a><a class="t3">Display</a><a class="t4">Selection</a><a class="t5">Automation</a><a class="active">Add-ons</a>
  <div class="quick"><input placeholder="Quick Launch">
    <svg viewBox="0 0 12 7"><path d="m1 6 5-5 5 5" fill="none" stroke="#cf9a10" stroke-width="2"/></svg>
    <svg class="q2" viewBox="0 0 14 14"><path d="m1 3 10-2 2 10-10 2z" fill="none" stroke="#444" stroke-width="1.400"/><path d="m4 8 2.500 2.500L11 2" fill="none" stroke="#cf9a10" stroke-width="1.800"/></svg>
    <svg class="q3" viewBox="0 0 20 14"><circle cx="7" cy="7" r="7" fill="#5a9bf0"/><path d="M4.800 5.500c0-3 4.400-3 4.400 0C9.200 7 7 7 7 9M7 10v1.500" fill="none" stroke="#fff" stroke-width="1.700"/><path d="M14.500 5.500h5.500l-2.700 3z" fill="#222"/></svg>
  </div>
</nav>

<section class="ribbon">
  <div class="grp g1"><div class="btns"><button class="b1"><svg><use href="#R-life"/></svg>DesignLife</button></div><b>Fatigue</b></div>
  <div class="grp g2"><div class="btns"><button class="b2"><svg><use href="#R-nvh"/></svg>NVH<br>Toolkit</button></div><b>NVH</b></div>
  <div class="grp g3"><div class="btns"><button class="b3"><svg><use href="#R-wheel"/></svg>Forced<br>Response</button></div><b>Turbomachinery</b></div>
  <div class="grp g4"><div class="btns"><button class="b4"><svg><use href="#R-drop"/></svg>Drop<br>Test</button></div><b>Explicit</b></div>
  <div class="grp g5"><div class="btns"><button class="b5"><svg><use href="#R-bolt"/></svg>Bolt<br>Tools</button><button class="b6"><svg><use href="#R-stat"/></svg>Statistics on<br>Structures</button></div><b>Mechanical Toolkit</b></div>
  <div class="grp g6"><div class="btns"><button class="b7"><svg><use href="#R-hydro"/></svg>Hydrodynamic<br>Pressure</button><button class="b8"><svg><use href="#R-off"/></svg>Offshore</button></div><b>Hydrodynamic Loads</b></div>
  <div class="grp g7"><div class="btns"><button class="b9"><svg><use href="#R-lpbf"/></svg>LPBF<br>Process</button><button class="b10"><svg><use href="#R-ded"/></svg>DED<br>Process</button><button class="b11"><svg class="big"><use href="#R-sint"/></svg>Sintering<br>Process</button><button class="b12"><svg class="big"><use href="#R-dist"/></svg>Distortion<br>Compensation</button></div><b>Additive Manufacturing</b></div>
  <div class="grp g8"><div class="btns"><button class="b13"><svg><use href="#R-var"/></svg>Variable<br>Load</button><button class="b14"><svg class="big"><use href="#R-mot"/></svg>Motion Load<br>Transfer</button></div><b>Rigid Dynamics</b></div>
  <div class="grp g9"><div class="btns"><button class="b15"><svg class="big"><use href="#R-help"/></svg>Add-ons<br>Help</button></div><b>Support</b></div>
</section>

<main>
<aside>
  <section class="outline">
    <div class="phead"><span>Outline</span><i class="dots"></i><i class="tri"></i><svg class="pin"><use href="#pin"/></svg><svg class="mx"><use href="#maxi"/></svg><svg class="cx"><use href="#cross"/></svg></div>
    <div class="filter"><i class="grip"></i><div class="sel name">Name<i class="tri s"></i></div><div class="sel search">Search Outline</div><svg viewBox="0 0 12 7"><path d="m1 1 5 5 5-5" fill="none" stroke="#cf9a10" stroke-width="1.900"/></svg><i class="tri low"></i></div>
    <div class="tree">
      <div class="root"><svg class="ic"><use href="#project"/></svg><b>Project*</b></div>
      <ul class="lvl0"><li><div class="row"><i class="ex m"></i><i class="ck"></i><svg class="ic"><use href="#f-geo"/></svg><b>Model (A4, B4)</b></div>
        <ul>
          <li><div class="row"><i class="ex p"></i><svg class="ck"><use href="#check"/></svg><svg class="ic"><use href="#f-geo"/></svg>Geometry Imports</div></li>
          <li><div class="row"><i class="ex p"></i><svg class="ck"><use href="#check"/></svg><svg class="ic"><use href="#geo"/></svg>Geometry</div></li>
          <li><div class="row"><i class="ex p"></i><svg class="ck"><use href="#check"/></svg><svg class="ic"><use href="#f-mat"/></svg>Materials</div></li>
          <li><div class="row"><i class="ex p"></i><svg class="ck"><use href="#check"/></svg><svg class="ic"><use href="#section"/></svg>Cross Sections</div></li>
          <li><div class="row"><i class="ex p"></i><svg class="ck"><use href="#check"/></svg><svg class="ic"><use href="#csys"/></svg>Coordinate Systems</div></li>
          <li><div class="row"><i class="ex"></i><svg class="ck"><use href="#check"/></svg><svg class="ic"><use href="#f-con"/></svg>Connections</div></li>
          <li><div class="row"><i class="ex"></i><svg class="ck"><use href="#check"/></svg><svg class="ic"><use href="#mesh"/></svg>Mesh</div></li>
          <li><div class="row"><i class="ex m"></i><svg class="ck"><use href="#check"/></svg><svg class="ic"><use href="#static"/></svg><b>Static Structural (A5)</b></div>
            <ul>
              <li><div class="row"><i class="ex"></i><svg class="ck"><use href="#check"/></svg><svg class="ic"><use href="#settings"/></svg>Analysis Settings</div></li>
              <li><div class="row"><i class="ex"></i><svg class="ck"><use href="#check"/></svg><svg class="ic"><use href="#disp"/></svg>Displacement</div></li>
              <li><div class="row"><i class="ex"></i><svg class="ck"><use href="#check"/></svg><svg class="ic"><use href="#fixrot"/></svg>Fixed Rotation</div></li>
              <li><div class="row"><i class="ex"></i><svg class="ck"><use href="#check"/></svg><svg class="ic"><use href="#disp"/></svg>Displacement 2</div></li>
              <li><div class="row"><i class="ex"></i><svg class="ck"><use href="#check"/></svg><svg class="ic"><use href="#force"/></svg>Force</div></li>
              <li><div class="row"><i class="ex"></i><svg class="ck"><use href="#check"/></svg><svg class="ic"><use href="#force"/></svg>Force 2</div></li>
              <li><div class="row"><i class="ex m"></i><svg class="ck"><use href="#check"/></svg><svg class="ic"><use href="#f-sol"/></svg><b>Solution (A6)</b></div>
                <ul>
                  <li><div class="row"><i class="ex"></i><svg class="ck"><use href="#check"/></svg><svg class="ic"><use href="#f-info"/></svg>Solution Information</div></li>
                  <li><div class="row"><i class="ex m"></i><svg class="ck"><use href="#check"/></svg><svg class="ic"><use href="#f-beam"/></svg>Beam Tool</div>
                    <ul>
                      <li><div class="row"><i class="ex"></i><svg class="ck"><use href="#check"/></svg><svg class="ic"><use href="#result"/></svg>Direct Stress</div></li>
                      <li><div class="row"><i class="ex"></i><svg class="ck"><use href="#check"/></svg><svg class="ic"><use href="#result"/></svg>Minimum Combined Stress</div></li>
                      <li><div class="row"><i class="ex"></i><svg class="ck"><use href="#check"/></svg><svg class="ic"><use href="#result"/></svg>Maximum Combined Stress</div></li>
                    </ul></li>
                </ul></li>
            </ul></li>
          <li><div class="row"><i class="ex m"></i><svg class="ck"><use href="#check"/></svg><svg class="ic"><use href="#eigen"/></svg><b>Eigenvalue Buckling (B5)</b></div>
            <ul>
              <li><div class="row"><i class="ex"></i><svg class="ck"><use href="#check"/></svg><svg class="ic"><use href="#prestress"/></svg>Pre-Stress (Static Structural)</div></li>
              <li><div class="row"><i class="ex"></i><svg class="ck"><use href="#check"/></svg><svg class="ic"><use href="#settings"/></svg>Analysis Settings</div></li>
              <li><div class="row"><i class="ex m"></i><svg class="ck"><use href="#check"/></svg><svg class="ic"><use href="#f-sol"/></svg><b>Solution (B6)</b></div>
                <ul>
                  <li><div class="row"><i class="ex"></i><svg class="ck"><use href="#check"/></svg><svg class="ic"><use href="#f-info"/></svg>Solution Information</div></li>
                  <li><div class="row"><i class="ex"></i><svg class="ck"><use href="#check"/></svg><svg class="ic"><use href="#result"/></svg><span class="picked">Total Deformation</span></div></li>
                </ul></li>
            </ul></li>
        </ul></li></ul>
    </div>
  </section>
  <section class="details">
    <div class="phead"><span>Details of "Total Deformation"</span><i class="dots"></i><i class="tri"></i><svg class="pin"><use href="#pin"/></svg><svg class="mx"><use href="#maxi"/></svg><svg class="cx"><use href="#cross"/></svg></div>
    <div class="props">
      <div class="cat"><i class="ex m"></i><b>Scope</b></div>
      <div class="pr ro"><span>Scoping Method</span><span>Geometry Selection</span></div>
      <div class="pr ro"><span>Geometry</span><span>All Bodies</span></div>
      <div class="cat"><i class="ex m"></i><b>Definition</b></div>
      <div class="pr"><span>Type</span><span>Total Deformation</span></div>
      <div class="pr"><span>Mode</span><span>1.</span></div>
      <div class="pr"><span>Separate Data by Entity</span><span>No</span></div>
      <div class="pr"><span>Identifier</span><span></span></div>
      <div class="pr"><span>Suppressed</span><span>No</span></div>
      <div class="cat"><i class="ex m"></i><b>Results</b></div>
      <div class="pr ro"><span><i class="cb"></i>Load Multiplier</span><span>0.8729</span></div>
      <div class="pr ro"><span><i class="cb"></i>Minimum</span><span>0. m</span></div>
      <div class="pr ro"><span><i class="cb"></i>Maximum</span><span>0.70753 m</span></div>
      <div class="pr ro"><span><i class="cb"></i>Average</span><span>0.31303 m</span></div>
      <div class="pr ro"><span>Minimum Occurs On</span><span>Line Body</span></div>
      <div class="pr ro"><span>Maximum Occurs On</span><span>Line Body</span></div>
    </div>
  </section>
</aside>

<div class="work">
  <div class="toolbar">
    <i class="grip"></i>
    <span class="tb"><svg><use href="#z-prev"/></svg></span><span class="tb"><svg><use href="#z-next"/></svg></span><i class="sp w7"></i>
    <span class="tb on"><svg><use href="#cubed"/></svg></span><span class="tb"><svg><use href="#cubel"/></svg></span><span class="tb"><svg><use href="#cubes2"/></svg></span><i class="sp"></i>
    <span class="tb"><svg><use href="#boxes"/></svg></span><i class="sp"></i>
    <span class="tb on wide"><svg><use href="#rotate"/></svg><i class="tri s"></i></span>
    <span class="tb w23"><svg><use href="#pan"/></svg></span><span class="tb"><svg><use href="#z-fit"/></svg></span><span class="tb"><svg><use href="#z-in"/></svg></span><span class="tb"><svg><use href="#z-cubeb"/></svg></span><span class="tb"><svg><use href="#z-cubeg"/></svg></span><span class="tb"><svg><use href="#z-fit"/></svg></span><i class="sp w7"></i>
    <span class="tx sel1">Select</span><span class="tx mode"><svg><use href="#mode"/></svg>Mode<i class="tri s"></i></span>
    <span class="tb"><svg><use href="#g-flt"/></svg></span><span class="tb"><svg><use href="#g-cube"/></svg></span><span class="tb"><svg><use href="#g-cube"/></svg></span><span class="tb"><svg><use href="#g-cubet"/></svg></span><span class="tb"><svg><use href="#g-cubef"/></svg></span><span class="tb"><svg><use href="#m-1"/></svg></span><span class="tb"><svg><use href="#m-2"/></svg></span><span class="tb"><svg><use href="#m-3"/></svg></span><span class="tb"><svg><use href="#xyz"/></svg></span><span class="tb"><svg><use href="#tag"/></svg></span><span class="tb"><svg><use href="#abc"/></svg></span><i class="sp"></i>
    <span class="tb"><svg><use href="#chart"/></svg></span><i class="sp w7"></i>
    <span class="tx clip"><svg><use href="#clip"/></svg>Clipboard<i class="tri s"></i></span><span class="tx empty">[ Empty ]</span><i class="sp"></i>
    <span class="tx ext"><svg><use href="#extend"/></svg>Extend<i class="tri s"></i></span><span class="tx sby"><svg><use href="#place"/></svg>Select By<i class="tri s"></i></span><span class="tx conv"><svg><use href="#convert"/></svg>Convert<i class="tri s"></i></span><i class="tri low"></i>
  </div>

  <svg class="viewport" viewBox="387 163 2173 919">
    <text class="vb" x="402" y="189" textLength="125">B: Eigenvalue Buckling</text>
    <text x="402" y="204" textLength="96">Total Deformation</text>
    <text x="402" y="219" textLength="127">Type: Total Deformation</text>
    <text x="402" y="234" textLength="163">Load Multiplier (Linear): 0.8729</text>
    <text x="402" y="249" textLength="39">Unit: m</text>
    <text x="402" y="264" textLength="97">3/31/2023 3:06 PM</text>
    <g stroke="#222">
      <path fill="#f00" d="M401.500 290h15v16h-15z"/><path fill="#ffb000" d="M401.500 306h15v17h-15z"/><path fill="#ff0" d="M401.500 323h15v17h-15z"/><path fill="#b0ff00" d="M401.500 340h15v16h-15z"/><path fill="#0f0" d="M401.500 356h15v17h-15z"/><path fill="#00ffb0" d="M401.500 373h15v17h-15z"/><path fill="#0ff" d="M401.500 390h15v16h-15z"/><path fill="#00b0ff" d="M401.500 406h15v17h-15z"/><path fill="#00f" d="M401.500 423h15v17h-15z"/>
      <path d="M401 289h16M401 440h16" stroke="#000" stroke-width="2"/>
    </g>
    <text class="vb" x="426" y="293" textLength="71">0.70753 Max</text>
    <text x="426" y="309" textLength="39">0.62892</text><text x="426" y="326" textLength="33">0.5503</text><text x="426" y="343" textLength="39">0.47169</text><text x="426" y="359" textLength="39">0.39307</text><text x="426" y="376" textLength="39">0.31446</text><text x="426" y="393" textLength="39">0.23584</text><text x="426" y="409" textLength="39">0.15723</text><text x="426" y="426" textLength="44">0.078615</text>
    <text class="vb" x="426" y="443" textLength="31">0 Min</text>

    <g class="logo"><path d="m2443 199 12-27h8l-10 27zM2464 173l11 26h-8l-7-18z" fill="#fff"/><text x="2474" y="199" textLength="79" class="l1">nsys</text><text x="2484" y="222.500" textLength="68" class="l2">2023 R1</text><path d="M2442 230h109" stroke="#e4eafa" stroke-width="2"/><text x="2449" y="251.500" textLength="88" class="l3">STUDENT</text></g>

    <g transform="translate(1786 346) rotate(66.700)">
      <path fill="#e00000" d="M0-2.500h118v5H0z"/><path fill="#dc9600" d="M118-2.500h49v5h-49z"/><path d="M0 2h167" stroke="#500" stroke-opacity=".6"/>
      <path d="m54-3 3 6M109-3l3 6" stroke="#000"/>
    </g>
    <g transform="translate(1852 500) rotate(62)">
      <path fill="#e09a00" d="M0-2.500h46v5H0z"/><path fill="#e4e400" d="M46-2.500h73v5H46z"/><path fill="#a0e000" d="M119-2.500h55v5h-55z"/><path fill="#00dc00" d="M174-2.500h56v5h-56z"/><path fill="#00d89a" d="M230-2.500h45v5h-45z"/><path fill="#00d0d0" d="M275-2.500h44v5h-44z"/><path fill="#0090d0" d="M319-2.500h43v5h-43z"/><path fill="#0000d0" d="M362-2.500h45v5h-45z"/>
      <path d="M0 1.700h407" stroke="#000" stroke-opacity=".4" stroke-width="1.600"/>
      <path d="m56 3 4-6M114 3l4-6M172 3l4-6M229 3l4-6M287 3l4-6M345 3l4-6M406-3v6" stroke="#000"/>
    </g>
    <g transform="translate(832 857) rotate(-58.270)">
      <path fill="#0000ac" d="M-4-5h190L183 5H-4z"/><path fill="#0078ac" d="M186-5h112l-3 10H183z"/><path fill="#00a8a8" d="M298-5h100l-3 10H295z"/><path fill="#00a878" d="M398-5h91l-3 10h-91z"/><path fill="#00a400" d="M489-5h90l-3 10h-90z"/><path fill="#789c00" d="M579-5h24V5h-27z"/>
      <path d="M-4 3.500h606" stroke="#000" stroke-opacity=".28" stroke-width="3"/><path d="M-4-4.700h606" stroke="#000" stroke-opacity=".3"/>
      <path d="m58-5 4 10M118-5l4 10M178-5l4 10M238-5l4 10M298-5l4 10M358-5l4 10M418-5l4 10M479-5l4 10M539-5l4 10M-4-4v9" stroke="#000" stroke-width="1.200"/>
    </g>
    <g transform="translate(1149 346) rotate(54.600)">
      <path fill="#90cc00" d="M-3-5.500h80V0H-3z"/><path fill="#688e00" d="M-3 0h80l4 5.500H-3z"/><path fill="#00d600" d="M77-5.500h301V0H77z"/><path fill="#008a00" d="M77 0h301v5.500H81z"/><path fill="#00d89c" d="M378-5.500h62V0h-62z"/><path fill="#008c64" d="M378 0h62v5.500h-62z"/>
      <path d="M-3-5.200h443M-3 5.200h443" stroke="#000" stroke-opacity=".35"/>
      <path d="m65-5.500-4 11M128-5.500l-4 11M191-5.500l-4 11M254-5.500l-4 11M316-5.500l-4 11M379-5.500l-4 11M-4-5l6 10M2-5l-6 10" stroke="#000" stroke-width="1.300"/>
    </g>
    <g transform="translate(1404 706) rotate(67.300)">
      <path fill="#00d89c" d="M0-2.500h150v5H0z"/><path fill="#00c8d0" d="M150-2.500h14v5h-14z"/><path d="M0 1.700h164" stroke="#005a40" stroke-opacity=".7" stroke-width="1.600"/><path d="m52 3 4-6M107 3l4-6" stroke="#000"/>
    </g>
    <g transform="translate(1404 705) rotate(-43.300)">
      <path fill="#00a074" d="M-4-6.500h26L18 6.500H-4z"/><path fill="#00a000" d="M22-6.500h102l-6 13H18z"/><path fill="#70a000" d="M124-6.500h98l-6 13H118z"/><path fill="#a0a000" d="M222-6.500h102l-6 13H216z"/><path fill="#a07000" d="M324-6.500h101l-6 13H318z"/><path fill="#a00000" d="M425-6.500h101v13H419z"/>
      <path d="M-4 5.500h530" stroke="#000" stroke-opacity=".38" stroke-width="2"/><path d="M-4-6.200h530" stroke="#000" stroke-opacity=".3"/>
      <path d="m65-6.500 2 13M130-6.500l2 13M195-6.500l2 13M261-6.500l2 13M326-6.500l2 13M392-6.500l2 13M457-6.500l2 13M525.500-6.500v13M-4-6.500v13" stroke="#000" stroke-width="1.200"/>
    </g>
    <g>
      <path fill="#0000bc" d="M828 850h195v8H828z"/><path fill="#000080" d="M828 858h195v6.500H828z"/><path fill="#0082bc" d="M1023 850h222v8h-222z"/><path fill="#005a84" d="M1023 858h222v6.500h-222z"/><path fill="#00bebe" d="M1245 850h223v8h-223z"/><path fill="#008484" d="M1245 858h223v6.500h-223z"/>
      <path d="M828 863.500h640" stroke="#000" stroke-opacity=".5" stroke-width="2"/><path d="M828 850.500h640" stroke="#fff" stroke-opacity=".25"/>
      <path d="M892.500 850v15M956.500 850v15M1022.500 850v15M1084.500 850v15M1148.500 850v15M1212.500 850v15M1276.500 850v15M1340.500 850v15M1404.500 850v15M1468 850v15M828.500 850v15" stroke="#000" stroke-opacity=".8"/>
    </g>
    <g transform="translate(1468 857.500) rotate(-43.150)">
      <path fill="#00a074" d="M-2-6.500h135l-6 13H-2z"/><path fill="#00a000" d="M133-6.500h120l-6 13H127z"/><path fill="#70a000" d="M253-6.500h110l-6 13H247z"/><path fill="#a0a000" d="M363-6.500h102l-6 13H357z"/><path fill="#a07000" d="M465-6.500h61v13h-67z"/>
      <path d="M-2 5.500h528" stroke="#000" stroke-opacity=".38" stroke-width="2"/><path d="M-2-6.200h528" stroke="#000" stroke-opacity=".3"/>
      <path d="m65-6.500 2 13M130-6.500l2 13M195-6.500l2 13M261-6.500l2 13M326-6.500l2 13M392-6.500l2 13M457-6.500l2 13M525-6.500v13" stroke="#000" stroke-width="1.200"/><path fill="#00a8b0" d="m-2-6 7-.5-5 13h-2z"/>
    </g>

    <g><path d="M2411.500 861h7v79h-7z" fill="url(#shaftG)"/><path d="m2415 833 12 28h-24z" fill="url(#shaftG)"/><path d="M2426 946.500h77v7h-77z" fill="url(#shaftR)"/><path d="m2503 938 30 12-30 12z" fill="url(#shaftR)"/><circle cx="2415" cy="950" r="11.700" fill="#00005a"/><path d="m2415 950-7-9.500a11.700 11.700 0 0 1 18.700 10z" fill="#0000dc"/><circle cx="2469.500" cy="895.500" r="12" fill="url(#ballCyan)"/><text class="ax ay" x="2415.500" y="814">Y</text><text class="ax" x="2550" y="949">X</text></g>

    <g><path d="M1222.500 1020.500h502v17h-502z" fill="#f8faff" stroke="#000"/><path d="M1222 1020h126v18h-126zM1473 1020h127v18h-127z"/><text x="1222" y="1017" text-anchor="middle" textLength="27">0.000</text><text x="1473" y="1017" text-anchor="middle" textLength="27">0.500</text><text x="1711" y="1017" textLength="47">1.000 (m)</text><text x="1347" y="1058.500" text-anchor="middle" textLength="27">0.250</text><text x="1600" y="1058.500" text-anchor="middle" textLength="27">0.750</text></g>
  </svg>

  <div class="bottom">
    <section class="graph">
      <div class="phead"><span>Graph</span><i class="dots"></i><i class="tri"></i><svg class="pin"><use href="#pin"/></svg><svg class="mx"><use href="#maxi"/></svg><svg class="cx"><use href="#cross"/></svg></div>
      <div class="toolbar anim">
        <i class="grip"></i><span class="tx an">Animation</span>
        <span class="tb"><svg viewBox="0 0 16 16"><path d="M1 1h3v14H1z" fill="#8a8a8a"/><path d="M14 2v12L5 8z" fill="#c0c0c0"/></svg></span><span class="tb"><svg viewBox="0 0 16 16"><path d="M3 1.500v13L14 8z" fill="#cf9a10"/></svg></span><span class="tb on"><svg viewBox="0 0 16 16"><path d="M2.500 2.500h11v11h-11z" fill="#cf9a10" stroke="#444"/></svg></span><span class="tb"><svg viewBox="0 0 16 16"><path d="M12 1h3v14h-3z" fill="#8a8a8a"/><path d="M2 2v12l9-6z" fill="#c0c0c0"/></svg></span><i class="sp"></i>
        <span class="tb on"><svg><use href="#bars"/></svg></span><span class="tb w23"><svg><use href="#barsg"/></svg></span><i class="sp w5"></i>
        <div class="sel fr">20 Frames<i class="tri s"></i></div><div class="sel sec">2 Sec (Auto)<i class="tri s"></i></div><i class="sp w7"></i>
        <span class="tb w20"><svg><use href="#film"/></svg></span><i class="sp w7"></i><span class="tb"><svg><use href="#z-play"/></svg></span><span class="tb"><svg><use href="#gridd"/></svg></span><span class="tb"><svg><use href="#curve"/></svg></span><span class="tb"><svg><use href="#wrench"/></svg></span><i class="sp w5"></i><span class="tb"><svg><use href="#filmg"/></svg></span><span class="tb"><svg><use href="#filmg"/></svg></span><i class="sp"></i><span class="tb"><svg><use href="#damp"/></svg></span><div class="sel cyc">3 Cycles</div><b class="aa">AA</b><i class="tri low"></i>
      </div>
      <svg class="plot" viewBox="387 1133 1085 247">
        <path d="M444 1157.500h1003.500V1330.500H444M444 1182.500h8M444 1207.500h8M444 1231.500h8M444 1256.500h8M444 1281.500h8M444 1306.500h8M452.500 1330v8" fill="none" stroke="#a8a8a8"/>
        <path d="M451 1151h3v7h-3z"/><path d="M451 1157h4v173h-4z" fill="#c00000"/><path d="M451.500 1330h2.500v2h-2.500z"/>
        <text class="vb" x="452.500" y="1147">1.</text>
        <g text-anchor="end"><text x="441" y="1163" textLength="33">0.8729</text><text x="441" y="1187" textLength="21">0.75</text><text x="441" y="1212" textLength="27">0.625</text><text x="441" y="1237" textLength="15">0.5</text><text x="441" y="1262" textLength="27">0.375</text><text x="441" y="1286" textLength="21">0.25</text><text x="441" y="1311" textLength="27">0.125</text><text x="441" y="1336" textLength="9">0.</text></g>
        <text x="449.500" y="1351">1</text>
      </svg>
    </section>
    <section class="tabular">
      <div class="phead"><span>Tabular Data</span><i class="dots"></i><i class="tri"></i><svg class="pin"><use href="#pin"/></svg><svg class="mx"><use href="#maxi"/></svg><svg class="cx"><use href="#cross"/></svg></div>
      <div class="grid"><span class="h"></span><span class="h">Mode</span><span class="h red"><i class="cbx"><svg viewBox="0 0 10 10"><path d="M2 4.500 4 7l4.500-5.500" fill="none" stroke="#000" stroke-width="1.800"/></svg></i>Load Multiplier</span><span class="h r">1</span><span class="c">1.</span><span class="c">0.8729</span></div>
    </section>
  </div>
</div>
</main>

<footer class="status"><span>Ready</span><div class="right"><svg class="msg" viewBox="0 0 16 15"><path d="M0 5h16v8H6l-3 2v-2H0z" fill="#f4d574"/><path d="M0 10h16v3H0z" fill="#d8a830"/><ellipse cx="10" cy="5.500" rx="2.600" ry="4.300" fill="#fff" stroke="#222" stroke-width="1.600"/></svg><span class="s1">No Messages</span><span class="s2">No Selection</span><svg class="up" viewBox="0 0 8 5"><path d="m0 5 4-5 4 5z" fill="#fff"/></svg><span class="s3">Metric (m, kg, N, s, V, A)</span><span class="s4">Degrees</span><span class="s5">rad/s</span><span class="s6">Celsius</span></div></footer>

<footer class="taskbar">
  <div class="start"><svg viewBox="0 0 16 16"><path d="m0 2.200 7.200-1v6.400H0zM8 1.100 16 0v7.600H8zM0 8.400h7.200v6.400L0 13.800zM8 8.400h8V16l-8-1.100z" fill="#fff"/></svg></div>
  <div class="find"><svg class="mag" viewBox="0 0 18 18"><circle cx="11" cy="7" r="5.500" fill="none" stroke="#222" stroke-width="1.300"/><path d="m7 11-6 6" stroke="#222" stroke-width="1.400"/></svg><span>Type here to search</span><svg class="bing" viewBox="0 0 28 28"><path d="M2 26V14A12.500 12.500 0 1 1 14 26.500H3z" fill="#fff" stroke="url(#bingG)" stroke-width="1.800"/><path d="M9.500 6.500 13 8v9l3-2-1.500-3 5 2c1.500 1 1.500 4-1 5.500L13 22l-3.500-2z" fill="url(#bingG)"/></svg></div>
  <div class="app tv"><svg viewBox="0 0 16 16"><path d="M.7 4h9.500v8H.7zM.7 0v2h9.500V0M.7 16v-2h9.500v2M14 0v4M14 8v8" fill="none" stroke="#fff" stroke-width="1.200"/><path d="M13 5h2v2h-2z" fill="#fff"/></svg></div>
  <div class="app multi"><svg viewBox="0 0 24 24"><circle cx="12" cy="12" r="12" fill="#fff"/><path d="M12 12 1.600 6A12 12 0 0 1 22.400 6z" fill="#ea4335"/><path d="M12 12 1.600 6A12 12 0 0 0 12 24l5-9z" fill="#34a853"/><path d="M12 6.500h10.700A12 12 0 0 1 12 24l5-9z" fill="#fbbc05"/><circle cx="12" cy="12" r="5.600" fill="#fff"/><circle cx="12" cy="12" r="4.400" fill="#4285f4"/></svg></div>
  <div class="app run"><svg viewBox="0 0 24 24"><path d="M1 3h9l2 2.500h11V21H1z" fill="#e8a92e"/><path d="M1 7h22v14H1z" fill="#ffd766"/><path d="M5 13h14v9h-4v-4H9v4H5z" fill="#3f98e0"/></svg></div>
  <div class="app run"><svg viewBox="0 0 24 24"><path d="m8 1 13 3-5 18-14-2z" fill="#9fd4e6"/><path d="m8 1 13 3-1.500 5L6 6z" fill="#5c98a8"/><path d="m21 4 2 1-5 17-2 0z" fill="#e8eef0"/><path d="m2 20 14 2-1 2-12-2z" fill="#48788a"/></svg></div>
  <div class="app run"><svg viewBox="0 0 24 24"><path d="M0 0h24v24H0z" fill="#000"/><g fill="none" stroke="#f0a818" stroke-width="1.200"><path d="m12 1 3 2v3l-3 2-3-2V3zM8 7l3 2v3l-3 2-3-2V9zM16 7l3 2v3l-3 2-3-2V9zM9 3l3 1.500L15 3M5 9l3 1.500L11 9M13 9l3 1.500L19 9"/></g><text class="wb" x="12" y="23" text-anchor="middle">WB</text></svg></div>
  <div class="app multi"><svg viewBox="0 0 24 24"><path d="M6 1h17v6H6z" fill="#41a5ee"/><path d="M6 7h17v5.500H6z" fill="#2b7cd3"/><path d="M6 12.500h17V18H6z" fill="#185abd"/><path d="M6 17h17v6H6z" fill="#103f91"/><path d="M0 6h13v12H0z" fill="#185abd"/><text class="w" x="6.500" y="15.500" text-anchor="middle">W</text></svg></div>
  <div class="app cur"><svg viewBox="0 0 24 24"><path d="M0 0h24v24H0z" fill="#000"/><circle cx="9" cy="10" r="4" fill="none" stroke="#f0a818" stroke-width="2.400"/><circle cx="9" cy="10" r="5.600" fill="none" stroke="#f0a818" stroke-width="1.300" stroke-dasharray="2 2.400"/><circle cx="17" cy="5" r="2.500" fill="none" stroke="#f0a818" stroke-width="1.600"/><circle cx="17" cy="5" r="3.700" fill="none" stroke="#f0a818" stroke-dasharray="1.400 1.500"/><text class="wb" x="12" y="23.500" text-anchor="middle">M</text></svg></div>
  <div class="tray">
    <svg class="ch" viewBox="0 0 12 8"><path d="m.5 7 5.500-5.500L11.500 7" fill="none" stroke="#fff" stroke-width="1.200"/></svg>
    <svg class="mo" viewBox="0 0 16 14"><path d="M5 1.500h10.500v8.500H4V5M7 13h6M10 10v3M.7 1h4v3h-4zM2.700 4v5.500H4" fill="none" stroke="#fff" stroke-width="1.100"/></svg>
    <svg class="vo" viewBox="0 0 16 14"><path d="M.6 5h2.600L6.500 2v10L3.200 9H.6zM9 5c1 1.500 1 2.500 0 4M11 3.500c2 2.500 2 4.500 0 7M13 2c3 3.500 3 6.500 0 10" fill="none" stroke="#fff" stroke-width="1.100"/></svg>
    <svg class="pe" viewBox="0 0 16 16"><path d="M1 14c-1-3 1-4 4-4M3 14c5 1 5-2 9-4M7 11l5-9c1-2 3-1 2 1l-5 9-3 1.500zM12 12c1-3 3-3 3-1s-2 1-3 1" fill="none" stroke="#fff" stroke-width="1.200"/></svg>
    <div class="clock">3:06 PM<br>3/31/2023</div>
    <div class="note"><svg viewBox="0 0 16 16"><path d="M0 0h16v12H8l-4 4v-4H0z" fill="#fff"/><path d="M3 3.500h10M3 6h10M3 8.500h7" stroke="#111"/></svg><span>16</span></div>
  </div>
</footer>
</body>
</html>
```
FILE: styles.css
```css
* { box-sizing: border-box; }
body { margin: 0; width: 2560px; height: 1440px; overflow: hidden; display: flex; flex-direction: column; background: #eeeef1; font: 11.5px/14px "Open Sans", "Noto Sans", sans-serif; color: #1e1e1e; }
i { font-style: normal; }
svg { display: block; flex: none; }
.defs { position: absolute; }
button, input { font: inherit; color: inherit; border: 0; background: none; padding: 0; }

/* title bar */
.titlebar { height: 26px; flex: none; display: flex; align-items: flex-start; position: relative; }
.titlebar .app { width: 16px; height: 16px; margin: 3px 0 0 8px; }
.vr { width: 1px; height: 23px; background: #ccc; margin-left: 7px; }
.save { width: 14px; height: 14px; margin: 4px 0 0 6px; }
.qat { width: 8px; height: 7px; margin: 7px 0 0 6px; }
.context { width: 59px; height: 26px; margin-left: 57px; border-top: 4px solid #2b579a; background: #d6e0f3; color: #3a6db5; text-align: center; line-height: 22px; letter-spacing: -.15px; }
.titlebar h1 { position: absolute; left: 0; right: 0; top: 0; margin: 0; text-align: center; font-weight: 400; font-size: 11px; line-height: 28px; color: #333; letter-spacing: -.1px; }
.titlebar h1::before { content: ""; position: absolute; top: 0; left: 1160px; width: 48px; height: 1px; background: #c050d0; }
.winbtns { margin: 8px 12px 0 auto; display: flex; gap: 23px; }
.winbtns svg { width: 10px; height: 12px; }
.winbtns svg:first-child { margin-right: 1px; }

/* tabs */
.tabs { height: 24px; flex: none; display: flex; border-bottom: 1px solid #c6c6c6; letter-spacing: -.1px; }
.tabs a { text-align: center; line-height: 26px; height: 24px; }
.tabs .file { width: 56px; height: 23px; line-height: 24px; background: #1e7fcf; color: #fff; }
.t1 { width: 72px; } .t2 { width: 48px; } .t3 { width: 79px; } .t4 { width: 63px; } .t5 { width: 98px; padding-left: 4px; }
.tabs .active { width: 71px; border: 1px solid #c6c6c6; border-bottom: 0; background: #fafafa; line-height: 24px; }
.quick { margin-left: auto; width: 230px; display: flex; align-items: center; }
.quick input { width: 160px; height: 21px; background: #fff; border: 1px solid #c8c8dc; padding: 0 3px; font-size: 11px; letter-spacing: 0; }
.quick input::placeholder { color: #a0a0a0; opacity: 1; }
.quick svg { width: 12px; height: 7px; margin-left: 4px; }
.quick .q2 { width: 14px; height: 14px; margin-left: 8px; }
.quick .q3 { width: 20px; height: 14px; margin-left: 8px; }

/* ribbon */
.ribbon { height: 87px; flex: none; background: #fafafa; border-bottom: 1px solid #c6c6c6; display: flex; padding-top: 6px; }
.grp { height: 73px; border-right: 1px solid #c8c8c8; display: flex; flex-direction: column; }
.btns { display: flex; height: 60px; }
.grp > b { font-weight: 400; font-size: 11.2px; letter-spacing: -.4px; text-align: center; line-height: 14px; white-space: nowrap; padding-left: 4px; }
.grp button { display: block; text-align: center; line-height: 11px; letter-spacing: -.18px; white-space: nowrap; align-self: flex-start; padding-left: 1px; }
.grp button svg { width: 28px; height: 28px; margin: 2px auto 8px; }
.grp button svg.big { width: 30px; height: 30px; margin: 1px auto 7px; }
.g1 { width: 72px; } .g2 { width: 53px; } .g3 { width: 90px; } .g4 { width: 53px; } .g5 { width: 120px; } .g6 { width: 140px; } .g7 { width: 229px; } .g8 { width: 129px; } .g9 { width: 61px; }
.b1 { width: 74px; } .b2 { width: 53px; } .b3 { width: 89px; } .b4 { width: 54px; } .b5 { width: 53px; } .b6 { width: 57px; } .b7 { width: 89px; } .b8 { width: 38px; }
.b9 { width: 54px; } .b10 { width: 33px; } .b11 { width: 61px; } .b12 { width: 72px; } .b13 { width: 59px; } .b14 { width: 60px; } .b15 { width: 60px; }
.b8, .b10, .b6 { display: flex !important; flex-direction: column; align-items: center; }
.b8 { padding: 0 !important; }

main { flex: 1; display: flex; min-height: 0; }
aside { width: 383px; margin-right: 4px; display: flex; flex-direction: column; gap: 4px; }
.outline { height: 743px; background: #fff; }
.details { flex: 1; background: #fff; }

/* panel header */
.phead { height: 20px; background: #eeeef1; border: 1px solid #cbcbdd; border-bottom: 0; display: flex; align-items: center; padding: 0 7px 1px 4px; color: #444; font-size: 11.5px; letter-spacing: -.15px; white-space: nowrap; }
.dots { flex: 1; height: 5px; margin: 0 2px 0 5px; background: url("data:image/svg+xml,%3Csvg xmlns='http://www.w3.org/2000/svg' width='4' height='4'%3E%3Cpath d='M0 0h1v1H0zM2 2h1v1H2z' fill='%23999'/%3E%3C/svg%3E"); }
.tri { width: 8px; height: 4px; flex: none; background: #222; clip-path: polygon(0 0, 100% 0, 50% 100%); }
.tri.s { width: 7px; background: #777; }
.tri.low { width: 6px; height: 3px; }
.pin { width: 9px; height: 12px; margin-left: 7px; }
.mx { width: 12px; height: 11px; margin-left: 7px; }
.cx { width: 9px; height: 9px; margin-left: 6px; }
.grip { width: 5px; height: 18px; flex: none; background: url("data:image/svg+xml,%3Csvg xmlns='http://www.w3.org/2000/svg' width='4' height='4'%3E%3Cpath d='M0 0h1v1H0zM2 2h1v1H2z' fill='%23999'/%3E%3C/svg%3E"); }
.sel { height: 23px; background: #fff; border: 1px solid #c8c8dc; display: flex; align-items: center; justify-content: space-between; padding: 0 3px; }

.filter { height: 27px; background: #eeeef1; display: flex; align-items: center; padding-left: 10px; }
.name { width: 99px; margin-left: 7px; }
.search { width: 90px; margin-left: 1px; color: #a8a8a8; letter-spacing: -.1px; }
.filter svg { width: 12px; height: 7px; margin-left: 5px; }
.filter .low, .toolbar .low { margin: 9px 0 0 7px; }

/* tree */
.tree { font-size: 11px; line-height: 16px; color: #000; white-space: nowrap; letter-spacing: -.45px; }
.tree b { letter-spacing: .15px; }
.root { height: 16px; display: flex; align-items: center; padding-left: 9px; gap: 6px; }
.ic { width: 14px; height: 14px; }
.tree ul { list-style: none; margin: 0; padding: 0 0 0 27px; }
.tree ul.lvl0 { padding: 0; }
.tree li { position: relative; }
.row { height: 16px; display: flex; align-items: center; padding-left: 8px; position: relative; }
.row .ic { margin-right: 6px; }
.row .ck { width: 8px; height: 9px; margin: 6px 1px 0 10px; flex: none; }
.ex { width: 9px; height: 9px; flex: none; position: relative; z-index: 1; }
.ex.m, .ex.p { border: 1px solid #808080; background: linear-gradient(#000, #000) center / 5px 1px no-repeat #fff; }
.ex.p { background: linear-gradient(#000, #000) center / 5px 1px no-repeat, linear-gradient(#000, #000) center / 1px 5px no-repeat #fff; }
.row::before { content: ""; position: absolute; left: 13px; top: 8px; width: 14px; border-top: 1px dotted #808080; }
.tree li::before { content: ""; position: absolute; left: 12px; top: 0; bottom: 0; border-left: 1px dotted #808080; }
.tree li:last-child::before { bottom: auto; height: 8px; }
.picked { background: #f0f0f0; line-height: 16px; margin-left: -1px; padding: 0 2px 0 1px; }

/* details */
.props { position: relative; }
.props > div { height: 18px; margin-left: 13px; border: 1px solid #a0a0a0; border-top: 0; line-height: 16px; display: flex; color: #000; font-size: 11px; }
.props > div:first-child { height: 19px; border-top: 1px solid #a0a0a0; }
.cat { position: relative; padding-left: 3px; }
.cat .ex { position: absolute; left: -12px; top: 4px; }
.pr > span { padding: 0 0 1px 3px; display: flex; align-items: center; white-space: nowrap; }
.pr > span:first-child { width: 127px; border-right: 1px solid #a0a0a0; flex: none; }
.pr > span:last-child { flex: 1; letter-spacing: -.05px; }
.ro > span:last-child { background: #e8e7e3; }
.cb { width: 12px; height: 12px; border: 1px solid #b8b8b8; background: #fff; margin-right: 4px; }

/* work area */
.work { flex: 1; display: flex; flex-direction: column; min-width: 0; }
.toolbar { height: 26px; flex: none; display: flex; align-items: center; font-size: 11.5px; letter-spacing: -.1px; white-space: nowrap; }
.toolbar > .grip { margin: 0 6px 0 11px; }
.tb { width: 22px; height: 22px; flex: none; display: flex; align-items: center; justify-content: center; }
.tb svg, .tx svg { width: 15px; height: 15px; }
.on { border: 1px solid #3a96f0; background: #eef4fc; }
.wide { width: 32px; justify-content: space-between; padding: 0 3px; }
.w23 { width: 23px; }
.w20 { width: 20px; }
.sp { width: 6px; height: 20px; flex: none; background: linear-gradient(#c4c4d0, #c4c4d0) center / 1px 100% no-repeat; }
.sp.w7 { width: 7px; }
.sp.w5 { width: 5px; }
.tx { display: flex; align-items: center; flex: none; }
.tx .tri { margin-left: 2px; }
.tx svg { margin-right: 3px; }
.sel1 { width: 41px; padding-left: 3px; }
.mode { width: 65px; }
.mode svg { width: 14px; height: 14px; }
.clip { width: 85px; padding-left: 3px; }
.empty { width: 57px; padding-left: 7px; }
.ext { width: 75px; padding-left: 5px; }
.sby { width: 84px; padding-left: 3px; }
.conv { width: 73px; padding-left: 3px; }

.viewport { width: 2173px; height: 919px; background: linear-gradient(#6a8bdf, #fff 99%); }
.viewport text, .plot text { font: 11px "Open Sans", sans-serif; fill: #000; }
.viewport .vb, .plot .vb { font-weight: 700; }
.viewport .ax { font: 10px "Liberation Sans", sans-serif; fill: #f00; }
.viewport .ay { fill: #00a000; }
.viewport .logo text { fill: #fff; font-weight: 700; }
.viewport .logo .l1 { font-size: 35px; }
.viewport .logo .l2 { font-size: 18px; font-weight: 600; }
.viewport .logo .l3 { font-size: 18.5px; }
.logoD { font: 700 20px "Open Sans", sans-serif; fill: #444; }

.bottom { flex: 1; display: flex; gap: 4px; padding-top: 4px; }
.graph { width: 1084px; display: flex; flex-direction: column; }
.tabular { flex: 1; background: #a0a0a0; }
.anim { height: 27px; padding-bottom: 1px; }
.toolbar.anim > .grip { margin: 0 11px 0 10px; }
.an { width: 60px; }
.fr { width: 99px; }
.sec { width: 100px; margin-left: 1px; }
.cyc { width: 60px; background: #eeeef1; color: #a8a8a8; }
.aa { margin-left: 4px; font-size: 11px; letter-spacing: -.5px; color: #333; }
.plot { width: 1085px; height: 247px; background: #fff; }

.grid { display: grid; grid-template-columns: 15px 39px 106px; grid-template-rows: 18px 16px; width: 160px; color: #000; line-height: 16px; font-size: 11.2px; letter-spacing: -.05px; }
.grid span { border-right: 1px solid #a0a0a0; border-bottom: 1px solid #a0a0a0; padding-left: 3px; white-space: nowrap; }
.grid .h { background: #f0f0f0; border-color: #808080; }
.grid .c { background: #e8e7e3; }
.grid .red { color: #c8001e; display: flex; align-items: center; gap: 4px; }
.cbx { width: 13px; height: 13px; background: #fff; border: 1px solid #777; }
.cbx svg { width: 11px; height: 11px; }

/* status bar */
.status { height: 20px; flex: none; background: #007acc; color: #fff; display: flex; justify-content: space-between; line-height: 21px; padding-left: 8px; }
.right { width: 487px; display: flex; align-items: center; white-space: nowrap; }
.msg { width: 16px; height: 15px; margin-right: 2px; }
.s1 { width: 88px; } .s2 { width: 89px; } .up { width: 8px; height: 5px; margin-right: 6px; } .s3 { width: 140px; } .s4 { width: 54px; } .s5 { width: 39px; }

/* taskbar */
.taskbar { height: 40px; flex: none; background: #101010; display: flex; color: #fff; }
.start { width: 48px; display: flex; align-items: center; justify-content: center; }
.start svg { width: 16px; height: 16px; }
.find { width: 288px; background: #f3f3f3; display: flex; align-items: center; border: 1px solid #ccc; border-width: 1px 1px 0 0; padding: 0 12px; color: #333; font-size: 14.5px; }
.mag { width: 17px; height: 17px; margin-right: 11px; }
.bing { width: 28px; height: 28px; margin-left: auto; }
.taskbar .app { width: 48px; margin-right: 1px; display: flex; align-items: center; justify-content: center; position: relative; }
.taskbar .app svg { width: 24px; height: 24px; }
.taskbar .tv { margin-right: 3px; }
.taskbar .tv svg { width: 16px; height: 16px; }
.taskbar .app + .app::after { content: ""; position: absolute; left: 4px; right: 4px; bottom: 0; height: 2px; background: #f26ee0; }
.taskbar .multi::after { background: linear-gradient(90deg, #f26ee0 31px, #a04c94 31px) !important; }
.taskbar .cur { background: #333; }
.taskbar .cur::after { left: 0 !important; right: 0 !important; }
.wb { font: 700 8.5px "Open Sans", sans-serif; fill: #fff; }
.w { font: 700 10px "Open Sans", sans-serif; fill: #fff; }
.tray { margin-left: auto; width: 215px; display: flex; align-items: center; }
.tray .ch { width: 12px; height: 8px; }
.tray .mo { width: 16px; height: 14px; margin-left: 10px; }
.tray .vo { width: 16px; height: 14px; margin-left: 8px; }
.tray .pe { width: 16px; height: 16px; margin-left: 12px; }
.clock { width: 54px; margin-left: 13px; text-align: center; line-height: 18px; font-size: 11.5px; }
.note { position: relative; width: 38px; height: 40px; margin-left: 17px; border-right: 1px solid #666; }
.note svg { width: 16px; height: 16px; margin: 12px 0 0; }
.note span { position: absolute; left: 6px; top: 19px; width: 18px; height: 16px; border-radius: 8px; border: 1px solid #999; background: #3a3a3a; font-size: 10px; font-weight: 600; line-height: 14px; text-align: center; }
```
